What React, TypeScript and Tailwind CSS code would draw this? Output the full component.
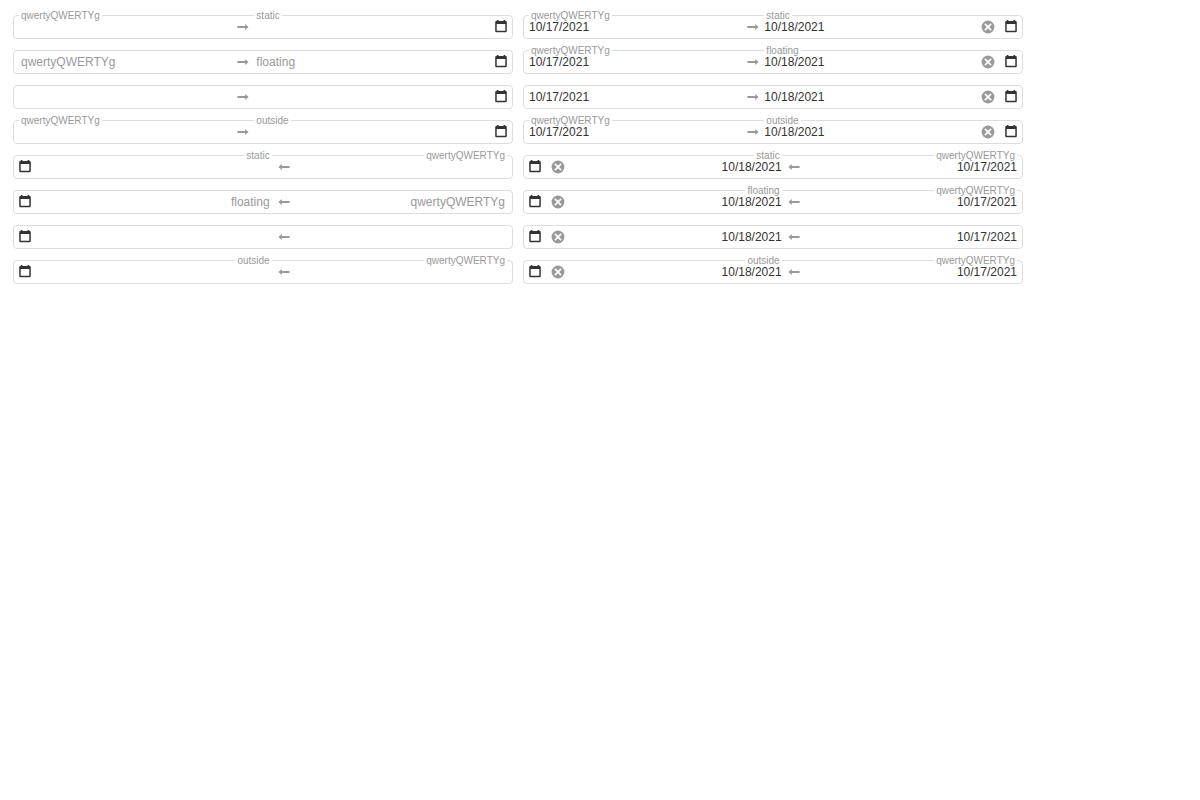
import { useId } from "react";

type LabelMode = "static" | "floating" | "hidden" | "outside";

const modes: LabelMode[] = ["static", "floating", "hidden", "outside"];

const START_LABEL = "qwertyQWERTYg";

function CalendarIcon() {
  return (
    <svg viewBox="0 0 14 14" className="block size-3.5 fill-[#333]" aria-hidden="true">
      <path
        fillRule="evenodd"
        d="M2.8 1H4.4V2H9.6V1H11.2V2H11.6Q12.8 2 12.8 3.2V12.1Q12.8 13.3 11.6 13.3H2.4Q1.2 13.3 1.2 12.1V3.2Q1.2 2 2.4 2H2.8zM2.7 5V11.8H11.3V5z"
      />
    </svg>
  );
}

function ClearIcon() {
  return (
    <svg viewBox="0 0 16 16" className="block size-4" aria-hidden="true">
      <circle cx="8" cy="8" r="6.4" className="fill-[#999]" />
      <path d="M4.9 4.9 11.1 11.1M11.1 4.9 4.9 11.1" className="stroke-white stroke-[1.7]" />
    </svg>
  );
}

function ArrowIcon({ rtl }: { rtl: boolean }) {
  return (
    <svg viewBox="0 0 14 14" className="mx-[5px] block size-3.5 shrink-0 fill-[#999]" aria-hidden="true">
      {rtl ? (
        <path d="M1.4 7 4.8 3.9V6.1H12.6V7.9H4.8V10.1z" />
      ) : (
        <path d="M13.6 7 10.2 3.9V6.1H2.4V7.9H10.2V10.1z" />
      )}
    </svg>
  );
}

interface FieldProps {
  label: string;
  mode: LabelMode;
  value: string;
}

function DateField({ label, mode, value }: FieldProps) {
  const id = useId();
  const inside = mode === "floating" && !value;
  return (
    <div className="relative h-full min-w-0 flex-1">
      <input
        id={id}
        type="text"
        defaultValue={value}
        aria-label={mode === "hidden" ? label : undefined}
        className="block h-full w-full bg-transparent text-xs text-[#333] outline-none"
      />
      {mode !== "hidden" && (
        <label
          htmlFor={id}
          className={
            inside
              ? "pointer-events-none absolute inset-y-0 start-0 flex items-center px-0.5 text-xs text-[#999]"
              : "pointer-events-none absolute -top-1.5 start-0 bg-white px-0.5 text-[10px] leading-[11px] text-[#999]"
          }
        >
          {label}
        </label>
      )}
    </div>
  );
}

interface RangeProps {
  mode: LabelMode;
  rtl: boolean;
  filled: boolean;
}

function DateRange({ mode, rtl, filled }: RangeProps) {
  return (
    <div
      dir={rtl ? "rtl" : "ltr"}
      className="flex h-6 items-center rounded border border-[#ddd] bg-white ps-[5px] pe-1"
    >
      <div className="flex h-full min-w-0 flex-5">
        <DateField label={START_LABEL} mode={mode} value={filled ? "10/17/2021" : ""} />
      </div>
      <ArrowIcon rtl={rtl} />
      <div className="flex h-full min-w-0 flex-6 items-center gap-2">
        <DateField label={mode} mode={mode} value={filled ? "10/18/2021" : ""} />
        {filled && (
          <button type="button" aria-label="Clear">
            <ClearIcon />
          </button>
        )}
        <button type="button" aria-label="Select date" className="pb-0.5">
          <CalendarIcon />
        </button>
      </div>
    </div>
  );
}

export default function App() {
  return (
    <main className="min-h-screen bg-white px-[13px] py-[15px] font-['Liberation_Sans',Arial,sans-serif]">
      <div className="grid max-w-[1010px] grid-cols-2 gap-x-2.5 gap-y-[11px]">
        {[false, true].map((rtl) =>
          modes.map((mode) =>
            [false, true].map((filled) => (
              <DateRange key={`${rtl}-${mode}-${filled}`} mode={mode} rtl={rtl} filled={filled} />
            )),
          ),
        )}
      </div>
    </main>
  );
}
